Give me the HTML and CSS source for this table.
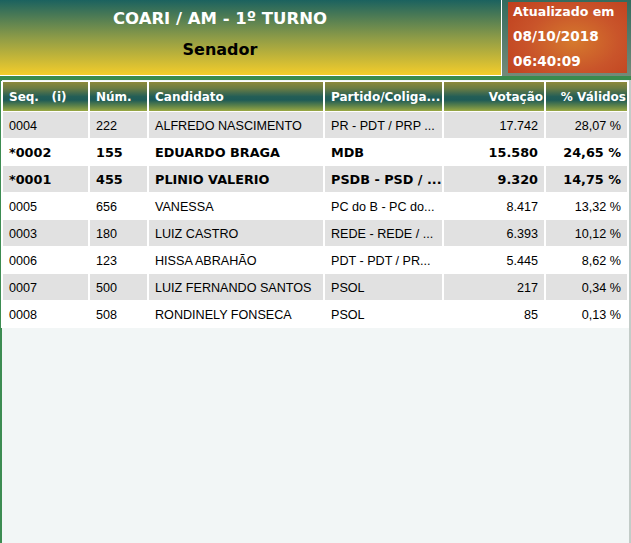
FILE: index.html
```html
<!DOCTYPE html>
<html lang="pt-BR">
<head>
<meta charset="utf-8">
<title>COARI / AM - 1º TURNO - Senador</title>
<link rel="stylesheet" href="styles.css">
</head>
<body>
<div class="page">
  <header class="top">
    <div class="title">
      <div class="title-main">COARI / AM - 1º TURNO</div>
      <div class="title-sub">Senador</div>
    </div>
    <div class="side">
      <div class="updated">
        <div class="updated-text">
          <div>Atualizado em</div>
          <div class="digits">08/10/2018</div>
          <div class="digits">06:40:09</div>
        </div>
      </div>
    </div>
  </header>
  <div class="strip"></div>
  <main class="panel">
    <table class="results">
      <colgroup>
        <col class="c-seq">
        <col class="c-num">
        <col class="c-cand">
        <col class="c-part">
        <col class="c-vot">
        <col class="c-pct">
      </colgroup>
      <thead>
        <tr>
          <th>Seq.&nbsp;&nbsp;&nbsp;(i)</th>
          <th>Núm.</th>
          <th>Candidato</th>
          <th>Partido/Coliga...</th>
          <th class="r">Votação</th>
          <th class="r">% Válidos</th>
        </tr>
      </thead>
      <tbody>
        <tr class="alt"><td>0004</td><td>222</td><td>ALFREDO NASCIMENTO</td><td>PR - PDT / PRP ...</td><td class="r">17.742</td><td class="r">28,07 %</td></tr>
        <tr class="elected"><td>*0002</td><td>155</td><td>EDUARDO BRAGA</td><td>MDB</td><td class="r">15.580</td><td class="r">24,65 %</td></tr>
        <tr class="alt elected"><td>*0001</td><td>455</td><td>PLINIO VALERIO</td><td>PSDB - PSD / ...</td><td class="r">9.320</td><td class="r">14,75 %</td></tr>
        <tr><td>0005</td><td>656</td><td>VANESSA</td><td>PC do B - PC do...</td><td class="r">8.417</td><td class="r">13,32 %</td></tr>
        <tr class="alt"><td>0003</td><td>180</td><td>LUIZ CASTRO</td><td>REDE - REDE / ...</td><td class="r">6.393</td><td class="r">10,12 %</td></tr>
        <tr><td>0006</td><td>123</td><td>HISSA ABRAHÃO</td><td>PDT - PDT / PR...</td><td class="r">5.445</td><td class="r">8,62 %</td></tr>
        <tr class="alt"><td>0007</td><td>500</td><td>LUIZ FERNANDO SANTOS</td><td>PSOL</td><td class="r">217</td><td class="r">0,34 %</td></tr>
        <tr><td>0008</td><td>508</td><td>RONDINELY FONSECA</td><td>PSOL</td><td class="r">85</td><td class="r">0,13 %</td></tr>
      </tbody>
    </table>
  </main>
</div>
</body>
</html>
```
FILE: styles.css
```css
html, body {
  margin: 0;
  padding: 0;
  height: 100%;
}
body {
  background: #f2f6f6;
  font-family: "Liberation Sans", Arial, sans-serif;
}
.page {
  display: flex;
  flex-direction: column;
  height: 100vh;
}
.top {
  display: flex;
  height: 76px;
  background: linear-gradient(#336b5e, #748a79);
}
.title {
  width: 501px;
  height: 75px;
  border-right: 1px solid #ffffff;
  border-bottom: 1px solid #ffffff;
  background: linear-gradient(#1b625f 0%, #8d9b47 50%, #f4cd2b 100%);
  font-family: "DejaVu Sans", Verdana, sans-serif;
  font-weight: bold;
  display: flex;
  flex-direction: column;
  align-items: center;
}
.title-main, .title-sub {
  width: 440px;
  text-align: center;
}
.title-main {
  color: #ffffff;
  font-size: 16.5px;
  line-height: 20px;
  margin-top: 9px;
  margin-right: 61px;
}
.title-sub {
  color: #000000;
  font-size: 16px;
  line-height: 20px;
  margin-top: 11px;
  margin-right: 61px;
}
.side {
  flex: 1;
  padding: 2px 4px 0 6px;
}
.updated {
  height: 71px;
  background: radial-gradient(ellipse 70% 80% at 55% 55%, #d67a2d 0%, #c9542a 55%, #c0411f 100%);
  color: #ffffff;
  font-family: "DejaVu Sans", Verdana, sans-serif;
  font-weight: bold;
  font-size: 12.6px;
  padding-left: 5px;
  overflow: hidden;
}
.updated-text {
  line-height: 25px;
  margin-top: -3px;
}
.updated-text .digits {
  font-size: 13.6px;
}
.strip {
  height: 4px;
  background: #3a8a4e;
}
.panel {
  flex: 1;
  border-left: 2px solid #3d8c52;
  border-right: 2px solid #c3ccc8;
  padding-top: 1px;
  background: #f2f6f6;
}
.results {
  table-layout: fixed;
  width: 628px;
  margin-left: -1px;
  border-collapse: separate;
  border-spacing: 2px 1px;
  background: #ffffff;
}
.c-seq { width: 85px; }
.c-num { width: 57px; }
.c-cand { width: 174px; }
.c-part { width: 117px; }
.c-vot { width: 100px; }
.c-pct { width: 81px; }
.results th,
.results td {
  box-sizing: border-box;
  white-space: nowrap;
  overflow: hidden;
  text-align: left;
}
.results th {
  height: 29px;
  padding: 1px 1px 0 6px;
  color: #ffffff;
  font-family: "DejaVu Sans", Verdana, sans-serif;
  font-weight: bold;
  font-size: 12px;
  background: linear-gradient(#8d893b 0%, #6b7c43 22%, #245e56 50%, #1e5b57 62%, #5d8249 82%, #9aa843 100%);
}
.results th.r {
  text-align: right;
  padding-right: 1px;
  padding-left: 0;
}
.results td {
  height: 26px;
  padding: 1px 6px 0 6px;
  font-size: 12.6px;
  color: #000000;
}
.results td.r {
  text-align: right;
}
.results tr.alt td {
  background: #e1e1e1;
}
.results tr.elected td {
  font-family: "DejaVu Sans", Verdana, sans-serif;
  font-weight: bold;
  font-size: 12.8px;
}
```
